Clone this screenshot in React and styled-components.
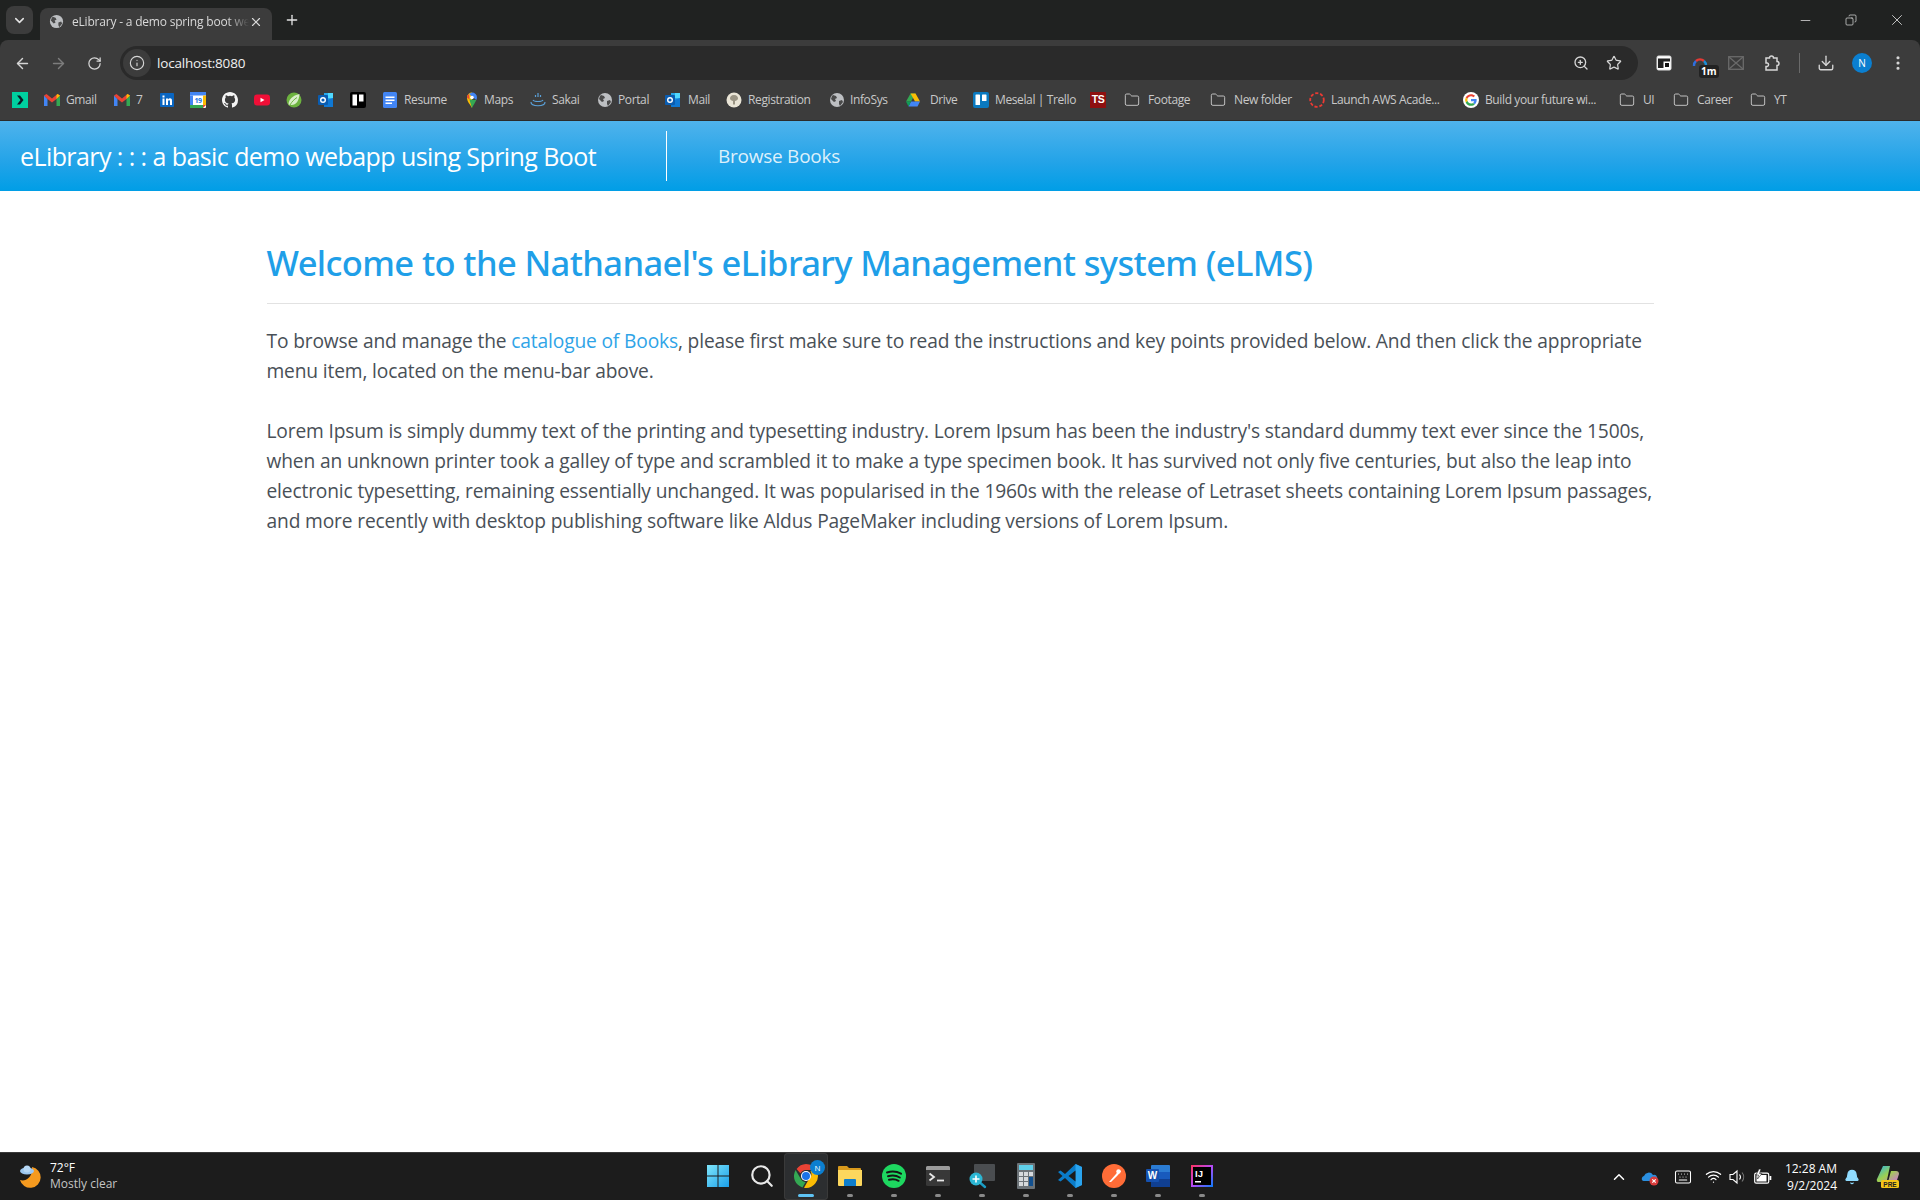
import React from "react";
import styled, { createGlobalStyle } from "styled-components";
import {
  ArrowLeft, ArrowRight, RotateCw, Info, ZoomIn, Star, Download, Folder,
  X, Plus, Minus, ChevronDown, ChevronUp, Copy, EllipsisVertical, Search, Keyboard, Wifi, Bell
} from "lucide-react";

const GlobalStyle = createGlobalStyle`
  html, body { margin: 0; padding: 0; background: #fff; }
  body { font-family: "Open Sans", "Liberation Sans", sans-serif; }
`;

const Page = styled.div`
  display: flex;
  flex-direction: column;
  height: 1200px;
  overflow: hidden;
`;

/* browser chrome */
const BrowserChrome = styled.header`
  flex: none;
  background: #202221;
`;
const TabStrip = styled.div`
  display: flex;
  height: 40px;
  box-sizing: border-box;
`;
const TabSearch = styled.div`
  display: flex;
  align-items: center;
  justify-content: center;
  width: 27px;
  height: 28px;
  margin: 6px 7px 0 6px;
  border-radius: 8px;
  background: #3c3c3c;
  color: #e3e3e3;
`;
const Tab = styled.div`
  display: flex;
  align-items: center;
  width: 232px;
  height: 32px;
  margin-top: 8px;
  padding: 0 9px 5px 9px;
  box-sizing: border-box;
  border-radius: 8px 8px 0 0;
  background: #3c3c3c;
  color: #d9d9d9;
`;
const TabTitle = styled.span`
  flex: 1;
  margin-left: 8px;
  font-size: 12px;
  letter-spacing: -0.2px;
  white-space: nowrap;
  overflow: hidden;
  -webkit-mask-image: linear-gradient(90deg, #000 88%, transparent);
  mask-image: linear-gradient(90deg, #000 88%, transparent);
`;
const NewTab = styled.div`
  display: flex;
  align-items: center;
  margin-left: 12px;
  color: #e3e3e3;
`;
const WindowControls = styled.div`
  display: flex;
  margin-left: auto;
  color: #e3e3e3;
`;
const WindowButton = styled.div`
  display: flex;
  align-items: center;
  justify-content: center;
  width: 46px;
  height: 40px;
`;
const Toolbar = styled.div`
  display: flex;
  align-items: center;
  height: 44px;
  padding: 2px 4px 0;
  box-sizing: border-box;
  background: #3c3c3c;
  border-radius: 8px 8px 0 0;
`;
const ToolButton = styled.div`
  display: flex;
  align-items: center;
  justify-content: center;
  position: relative;
  flex: none;
  width: 36px;
  height: 34px;
  color: ${(p) => (p.$dim ? "#7d7d7d" : "#d6d6d6")};
`;
const Omnibox = styled.div`
  display: flex;
  align-items: center;
  flex: 1;
  height: 34px;
  margin: 0 8px;
  padding: 0 8px 0 3px;
  border-radius: 17px;
  background: #2a2a2a;
  color: #d6d6d6;
`;
const SiteInfo = styled.div`
  display: flex;
  align-items: center;
  justify-content: center;
  width: 28px;
  height: 28px;
  border-radius: 50%;
  background: #3c3c3c;
`;
const Url = styled.span`
  flex: 1;
  margin-left: 6px;
  font-size: 13.5px;
  letter-spacing: -0.2px;
  color: #f0f0f0;
`;
const OmniAction = styled.div`
  display: flex;
  justify-content: center;
  width: 33px;
`;
const ToolSeparator = styled.div`
  flex: none;
  width: 1px;
  height: 20px;
  margin: 0 8px 0 9px;
  background: #6a6a6a;
`;
const Badge = styled.span`
  position: absolute;
  left: 17px;
  top: 19px;
  padding: 0 2px;
  border-radius: 3px;
  background: #222;
  color: #fff;
  font-size: 10px;
  line-height: 13px;
  font-weight: 700;
`;
const Avatar = styled.div`
  display: flex;
  align-items: center;
  justify-content: center;
  width: 20px;
  height: 20px;
  border-radius: 50%;
  background: #0b7fd0;
  color: #fff;
  font-size: 10px;
`;
const BookmarkBar = styled.div`
  display: flex;
  align-items: center;
  height: 37px;
  padding: 0 0 5px 4px;
  box-sizing: border-box;
  background: #3c3c3c;
  border-bottom: 1px solid #2b2b2b;
`;
const Bookmark = styled.div`
  display: flex;
  align-items: center;
  flex: none;
  gap: ${(p) => p.$gap || 6}px;
  width: ${(p) => p.$w}px;
  padding-left: 8px;
  box-sizing: border-box;
  color: #c9c9c9;
  font-size: 12px;
  letter-spacing: -0.38px;
  white-space: nowrap;
  svg { flex: none; }
`;

/* the demo page */
const NavBar = styled.nav`
  display: flex;
  align-items: center;
  height: 70px;
  flex: none;
  background: linear-gradient(#4fb3ec, #22a3e8 60%, #009ee6);
  color: #fff;
`;
const Brand = styled.a`
  width: 667px;
  height: 50px;
  padding-left: 20px;
  box-sizing: border-box;
  border-right: 1px solid #fff;
  font-size: 25px;
  line-height: 50px;
  letter-spacing: -0.58px;
`;
const NavLink = styled.a`
  margin-left: 51px;
  font-size: 19px;
  letter-spacing: -0.25px;
  color: rgba(255, 255, 255, 0.85);
`;
const Main = styled.main`
  flex: 1;
  width: 1387px;
  margin: 0 auto;
  padding-top: 50px;
  color: #495057;
`;
const Heading = styled.h1`
  margin: 0;
  padding-bottom: 19px;
  border-bottom: 1px solid #e2e2e2;
  font-family: "Noto Sans", "Open Sans", sans-serif;
  font-size: 34.5px;
  font-weight: 500;
  line-height: 43px;
  letter-spacing: -0.62px;
  color: #1f9fe8;
`;
const Text = styled.p`
  margin: ${(p) => (p.$first ? "22px 0 30px" : "0")};
  font-size: 19.2px;
  line-height: 30px;
  letter-spacing: -0.15px;
`;
const TextLink = styled.a`
  color: #2fa4e7;
`;

/* windows taskbar */
const Taskbar = styled.footer`
  display: grid;
  grid-template-columns: 1fr auto 1fr;
  flex: none;
  height: 48px;
  box-sizing: border-box;
  border-top: 1px solid #3a3a3a;
  background: #1c1c1c;
  color: #fff;
`;
const Weather = styled.div`
  display: flex;
  align-items: center;
  padding: 0 0 2px 19px;
  gap: 7px;
  font-size: 12px;
  line-height: 16px;
`;
const WeatherDim = styled.div`
  color: #c4c4c4;
`;
const Dock = styled.div`
  display: flex;
`;
const DockItem = styled.div`
  display: flex;
  align-items: center;
  justify-content: center;
  position: relative;
  width: 44px;
  height: 47px;
  padding-bottom: 2px;
  box-sizing: border-box;
  ${(p) => p.$active && "background: #2c2e30; border-radius: 4px; box-shadow: inset 0 0 0 1px #3a3a3a;"}
`;
const DockDot = styled.span`
  position: absolute;
  left: 50%;
  bottom: 3px;
  transform: translateX(-50%);
  width: ${(p) => (p.$active ? 16 : 6)}px;
  height: 3px;
  border-radius: 2px;
  background: ${(p) => (p.$active ? "#5fc4f5" : "#8a8a8a")};
`;
const DockBadge = styled.span`
  position: absolute;
  right: 3px;
  top: 7px;
  width: 15px;
  height: 15px;
  border-radius: 50%;
  background: #0b7fd0;
  color: #fff;
  font-size: 8px;
  line-height: 15px;
  text-align: center;
`;
const Tray = styled.div`
  display: flex;
  align-items: center;
  justify-content: flex-end;
  padding-right: 11px;
`;
const TrayIcon = styled.div`
  display: flex;
  justify-content: center;
  flex: none;
  width: ${(p) => p.$w || 24}px;
  margin-left: ${(p) => p.$ml || 0}px;
`;
const Clock = styled.div`
  margin-left: 10px;
  font-size: 12px;
  line-height: 17px;
  text-align: right;
`;

/* favicons */
const Globe = ({ size = 16 }) => (
  <svg width={size} height={size} viewBox="0 0 16 16">
    <circle cx="8" cy="8" r="7" fill="#bdbfc2" />
    <path d="M4 3l3 1 1 2-2 1 1 2-2 1-3-3 1-3zM10 9l3-1 1 2-3 4-1-2z" fill="#4a4a4a" />
  </svg>
);
const Gmail = () => (
  <svg width="16" height="16" viewBox="0 0 16 16">
    <path d="M0 3.500V14h3.500V7z" fill="#4285f4" />
    <path d="M16 3.500V14h-3.500V7z" fill="#34a853" />
    <path d="M0 3.500L2.500 2 8 6.500 13.500 2 16 3.500 12.500 7 8 10.500 3.500 7z" fill="#ea4335" />
    <path d="M12.500 3L13.500 2 16 3.500 12.500 7z" fill="#fbbc04" />
  </svg>
);
const LinkedIn = () => (
  <svg width="16" height="16" viewBox="0 0 16 16">
    <rect x="1" y="1" width="14" height="14" rx="1" fill="#0a66c2" />
    <path d="M3.500 6.500h2V13h-2zM3.500 3.500h2v2h-2zM7 6.500h2v1c.5-.8 1.200-1.200 2-1.200 1.600 0 2 1.100 2 2.700v4h-2V9.500c0-.8-.2-1.300-.9-1.300-.8 0-1.100.6-1.100 1.400V13H7z" fill="#fff" />
  </svg>
);
const Calendar = () => (
  <svg width="16" height="16" viewBox="0 0 16 16">
    <rect x="0" y="0" width="16" height="16" rx="1" fill="#fff" />
    <path d="M0 0h16v3.500H0z" fill="#4285f4" />
    <path d="M0 3.500h3V13H0z" fill="#4285f4" />
    <path d="M13 3.500h3V13h-3z" fill="#fbbc04" />
    <path d="M0 13h13v3H0z" fill="#34a853" />
    <path d="M13 13h3l-3 3z" fill="#ea4335" />
    <text x="8" y="11" fontSize="7" fontWeight="700" textAnchor="middle" fill="#1a73e8">19</text>
  </svg>
);
const GitHub = () => (
  <svg width="16" height="16" viewBox="0 0 16 16">
    <path fill="#f4f4f4" d="M8 0C3.580 0 0 3.580 0 8c0 3.540 2.290 6.530 5.470 7.590.4.070.55-.17.55-.38 0-.19-.01-.82-.01-1.490-2.010.37-2.530-.49-2.690-.94-.09-.23-.48-.94-.82-1.130-.28-.15-.68-.52-.01-.53.63-.01 1.080.58 1.230.82.720 1.210 1.870.870 2.330.660.070-.520.280-.870.510-1.070-1.780-.2-3.640-.890-3.640-3.950 0-.870.310-1.590.820-2.150-.08-.2-.36-1.020.08-2.120 0 0 .670-.210 2.200.820a7.420 7.420 0 0 1 4 0c1.530-1.040 2.200-.820 2.200-.820.440 1.100.160 1.920.080 2.120.510.560.820 1.270.820 2.150 0 3.070-1.870 3.750-3.650 3.950.290.250.540.730.540 1.480 0 1.070-.01 1.930-.01 2.200 0 .210.150.460.550.380A8.010 8.010 0 0 0 16 8c0-4.420-3.580-8-8-8z" />
  </svg>
);
const YouTube = () => (
  <svg width="16" height="16" viewBox="0 0 16 16">
    <rect x="0" y="2.500" width="16" height="11" rx="3" fill="#f00f37" />
    <path d="M6.500 5.700L10.500 8l-4 2.300z" fill="#fff" />
  </svg>
);
const Spring = () => (
  <svg width="16" height="16" viewBox="0 0 16 16">
    <circle cx="8" cy="8" r="7.500" fill="#6db33f" />
    <path d="M2.500 12.500c0-5 4-9 11-10.500-.5 7-3.500 11-8 11-1 0-2 0-3-.5z" fill="#d9eec9" />
    <path d="M4 13c2-3.500 4-5.500 7-7.500" fill="none" stroke="#6db33f" strokeWidth="1" />
  </svg>
);
const Outlook = () => (
  <svg width="16" height="16" viewBox="0 0 16 16">
    <path d="M6 1h9v14H6z" fill="#28a8ea" />
    <path d="M10 1h5v5h-5z" fill="#50d9ff" />
    <path d="M6 9l9-3v9H6z" fill="#0f78d4" />
    <rect x="0" y="3" width="10" height="10" rx="1" fill="#0a5cb0" />
    <circle cx="5" cy="8" r="2.300" fill="none" stroke="#fff" strokeWidth="1.400" />
  </svg>
);
const TrelloDark = () => (
  <svg width="16" height="16" viewBox="0 0 16 16">
    <rect width="16" height="16" rx="2" fill="#000" />
    <rect x="2.500" y="2.500" width="4.500" height="11" fill="#fff" />
    <rect x="9" y="2.500" width="4.500" height="7" fill="#fff" />
  </svg>
);
const TrelloBlue = () => (
  <svg width="16" height="16" viewBox="0 0 16 16">
    <rect width="16" height="16" rx="2" fill="#0a79bf" />
    <rect x="2.500" y="2.500" width="4.500" height="10.500" rx=".6" fill="#fff" />
    <rect x="9" y="2.500" width="4.500" height="6.500" rx=".6" fill="#fff" />
  </svg>
);
const Docs = () => (
  <svg width="16" height="16" viewBox="0 0 16 16">
    <rect x="1" y="0" width="14" height="16" rx="1.500" fill="#4285f4" />
    <path d="M3.500 4.500h9v1.500h-9zM3.500 7.500h9V9h-9zM3.500 10.500h6.500V12H3.500z" fill="#fff" />
  </svg>
);
const Maps = () => (
  <svg width="16" height="16" viewBox="0 0 16 16">
    <path d="M8 16C6 12 3 10 3 5.500a5 5 0 0 1 5-5z" fill="#fbbc04" />
    <path d="M8 .5a5 5 0 0 1 5 5c0 1-.3 1.800-.7 2.600L5 2z" fill="#4285f4" />
    <path d="M5 2L3.500 3.500 3 5.500l2.500 2z" fill="#ea4335" />
    <path d="M8 16c1.500-3 3-5 4.300-7.900L5.500 7.500C6 10 7 13 8 16z" fill="#34a853" />
    <circle cx="8" cy="5.500" r="1.800" fill="#fff" />
  </svg>
);
const Sakai = () => (
  <svg width="16" height="16" viewBox="0 0 16 16" fill="none" stroke="#5aa0d8" strokeWidth="1.200">
    <path d="M8 1v4M5.500 3v2M10.500 3v2" />
    <path d="M3 8c1 2 9 2 10 0M1 10c0 5 14 5 14 0" />
  </svg>
);
const Registration = () => (
  <svg width="16" height="16" viewBox="0 0 16 16">
    <circle cx="8" cy="8" r="7.500" fill="#e9e4d6" />
    <path d="M8 3c3 0 4 2 4 3.500S10 9 9 9v3.500H7V9C6 9 4 8 4 6.500S5 3 8 3z" fill="#9a9484" />
  </svg>
);
const Drive = () => (
  <svg width="16" height="16" viewBox="0 0 16 16">
    <path d="M5.500 1.500h5L6 9.500H1z" fill="#34a853" />
    <path d="M5.500 1.500h5L15 9.500h-5z" fill="#fbbc04" />
    <path d="M3.500 14.500L6 9.500h9l-2.500 5z" fill="#4285f4" />
    <path d="M1 9.500h5l-2.500 5z" fill="#0f9d58" />
  </svg>
);
const TsLogo = () => (
  <svg width="16" height="16" viewBox="0 0 16 16">
    <rect width="16" height="16" fill="#8e1010" />
    <text x="8" y="11" fontSize="10.500" fontWeight="800" fontFamily="Liberation Sans" textAnchor="middle" fill="#fff">TS</text>
  </svg>
);
const Aws = () => (
  <svg width="16" height="16" viewBox="0 0 16 16">
    <circle cx="8" cy="8" r="6.800" fill="none" stroke="#ea3a33" strokeWidth="1.800" strokeDasharray="3.200 1.800" />
  </svg>
);
const Google = () => (
  <svg width="16" height="16" viewBox="0 0 48 48">
    <circle cx="24" cy="24" r="24" fill="#fff" />
    <path fill="#ea4335" d="M24 13c3 0 5.400 1 7.400 2.900l4.800-4.800C33 8.200 29 6.500 24 6.500 17 6.500 11 10.500 8.100 16.300l5.600 4.300C15 16.200 19.100 13 24 13z" />
    <path fill="#4285f4" d="M41 24.400c0-1.200-.1-2.400-.3-3.500H24v6.700h9.600c-.4 2.200-1.700 4-3.500 5.300l5.400 4.200C38.900 33.500 41 29.400 41 24.400z" />
    <path fill="#fbbc05" d="M13.700 27.400a10.500 10.500 0 0 1 0-6.800l-5.600-4.300a17.500 17.500 0 0 0 0 15.400z" />
    <path fill="#34a853" d="M24 41.500c4.700 0 8.700-1.600 11.500-4.300l-5.400-4.200c-1.500 1-3.500 1.600-6.100 1.600-4.900 0-9-3.200-10.300-7.600l-5.600 4.300C11 37.500 17 41.500 24 41.500z" />
  </svg>
);
const Prime = () => (
  <svg width="16" height="16" viewBox="0 0 16 16">
    <rect width="16" height="16" fill="#00d1a0" />
    <path d="M5 3.500h3L11.500 8 8 12.500H5L8.500 8z" fill="#0c1a26" />
  </svg>
);
const FolderIcon = () => <Folder size={16} strokeWidth={1.4} color="#c9c9c9" />;

const bookmarks = [
  { w: 32, icon: <Prime /> },
  { w: 70, icon: <Gmail />, label: "Gmail" },
  { w: 45, icon: <Gmail />, label: "7" },
  { w: 31, icon: <LinkedIn /> },
  { w: 32, icon: <Calendar /> },
  { w: 32, icon: <GitHub /> },
  { w: 32, icon: <YouTube /> },
  { w: 32, icon: <Spring /> },
  { w: 32, icon: <Outlook /> },
  { w: 32, icon: <TrelloDark /> },
  { w: 82, icon: <Docs />, label: "Resume" },
  { w: 66, icon: <Maps />, label: "Maps", gap: 4 },
  { w: 67, icon: <Sakai />, label: "Sakai" },
  { w: 68, icon: <Globe />, label: "Portal", gap: 5 },
  { w: 61, icon: <Outlook />, label: "Mail", gap: 7 },
  { w: 103, icon: <Registration />, label: "Registration" },
  { w: 76, icon: <Globe />, label: "InfoSys", gap: 5 },
  { w: 68, icon: <Drive />, label: "Drive", gap: 9 },
  { w: 117, icon: <TrelloBlue />, label: "Meselal | Trello" },
  { w: 34, icon: <TsLogo /> },
  { w: 86, icon: <FolderIcon />, label: "Footage", gap: 8 },
  { w: 99, icon: <FolderIcon />, label: "New folder", gap: 8 },
  { w: 154, icon: <Aws />, label: "Launch AWS Acade..." },
  { w: 156, icon: <Google />, label: "Build your future wi..." },
  { w: 54, icon: <FolderIcon />, label: "UI", gap: 8 },
  { w: 77, icon: <FolderIcon />, label: "Career", gap: 8 },
  { w: 60, icon: <FolderIcon />, label: "YT", gap: 8 },
];

/* taskbar icons */
const WinLogo = () => (
  <svg width="24" height="24" viewBox="0 0 24 24">
    <defs>
      <linearGradient id="win" x1="0" y1="0" x2="1" y2="1">
        <stop offset="0" stopColor="#7fe6fb" />
        <stop offset="1" stopColor="#1a9ee8" />
      </linearGradient>
    </defs>
    <path d="M1 1h10.500v10.500H1zM12.500 1H23v10.500H12.500zM1 12.500h10.500V23H1zM12.500 12.500H23V23H12.500z" fill="url(#win)" />
  </svg>
);
const ChromeLogo = () => (
  <svg width="24" height="24" viewBox="0 0 24 24">
    <path d="M12 0a12 12 0 0 1 10.400 6H12a6 6 0 0 0-5.500 3.500L2.600 5A12 12 0 0 1 12 0z" fill="#ea4335" />
    <path d="M1.600 6l5 8.500a6 6 0 0 0 5 3.500L8.500 23.500A12 12 0 0 1 1.600 6z" fill="#34a853" />
    <path d="M22.800 7a12 12 0 0 1-12.800 16.800l5-8.800A6 6 0 0 0 16.500 7z" fill="#fbbc04" />
    <circle cx="12" cy="12" r="5" fill="#fff" />
    <circle cx="12" cy="12" r="4" fill="#1a73e8" />
  </svg>
);
const Explorer = () => (
  <svg width="24" height="24" viewBox="0 0 24 24">
    <path d="M0 3a1 1 0 0 1 1-1h8l2 2h11a1 1 0 0 1 1 1v3H0z" fill="#d99a1c" />
    <path d="M0 6h24v15a1 1 0 0 1-1 1H1a1 1 0 0 1-1-1z" fill="#fcd75e" />
    <path d="M6 22v-6a1 1 0 0 1 1-1h10a1 1 0 0 1 1 1v6z" fill="#0f7ecb" />
  </svg>
);
const Spotify = () => (
  <svg width="24" height="24" viewBox="0 0 24 24">
    <circle cx="12" cy="12" r="12" fill="#1ed760" />
    <path d="M5 8.500c5-1.500 10-1 14 1.200M6 12.300c4-1.200 8.500-.8 11.800 1.200M7 15.800c3.400-.9 6.800-.6 9.600 1" fill="none" stroke="#151515" strokeWidth="2" strokeLinecap="round" />
  </svg>
);
const Terminal = () => (
  <svg width="24" height="24" viewBox="0 0 24 24">
    <rect y="2" width="24" height="20" rx="1.500" fill="#383838" />
    <path d="M0 3.500A1.500 1.500 0 0 1 1.500 2h21A1.500 1.500 0 0 1 24 3.500V6H0z" fill="#9b9b9b" />
    <path d="M3.500 9.500L8 13l-4.500 3.500" fill="none" stroke="#e8e8e8" strokeWidth="1.800" />
    <path d="M11 16.500h7" stroke="#e8e8e8" strokeWidth="1.800" />
  </svg>
);
const Magnifier = () => (
  <svg width="26" height="26" viewBox="0 0 26 26">
    <rect x="5" y="1" width="21" height="17" rx="1" fill="#4a4d50" />
    <path d="M8 17l8 7" stroke="#1b9cc4" strokeWidth="2.400" strokeLinecap="round" />
    <circle cx="7" cy="16" r="6.500" fill="#2cb6d3" />
    <path d="M7 12.500v7M3.500 16h7" stroke="#fff" strokeWidth="1.600" />
  </svg>
);
const Calculator = () => (
  <svg width="24" height="26" viewBox="0 0 24 26">
    <rect x="3" y="0" width="18" height="26" rx="1" fill="#6c7378" />
    <rect x="5" y="2" width="14" height="5" fill="#5fd0ea" />
    <path d="M5 9h4v4H5zM10 9h4v4h-4zM15 9h4v4h-4zM5 14h4v4H5zM10 14h4v4h-4zM5 19h4v4H5zM10 19h4v4h-4z" fill="#d6dadd" />
    <path d="M15 14h4v9h-4z" fill="#12508f" />
  </svg>
);
const VsCode = () => (
  <svg width="24" height="24" viewBox="0 0 24 24">
    <path d="M17.500 0L24 3v18l-6.500 3L7 14l-4.500 3.500L0 16l4.500-4L0 8l2.500-1.500L7 10z" fill="#0a7cc9" />
    <path d="M17.500 0L24 3v18l-6.500 3z" fill="#2aa4ee" />
    <path d="M17.500 6.500L10.500 12l7 5.500z" fill="#1c1c1c" />
  </svg>
);
const Postman = () => (
  <svg width="24" height="24" viewBox="0 0 24 24">
    <circle cx="12" cy="12" r="12" fill="#ff6c37" />
    <path d="M7 18l7-8 3-4 2 1-3 4-7 7z" fill="#fff" />
    <circle cx="16.500" cy="7.500" r="2.200" fill="#fff" />
  </svg>
);
const Word = () => (
  <svg width="24" height="24" viewBox="0 0 24 24">
    <rect x="5" y="1" width="19" height="22" rx="1" fill="#2b7cd3" />
    <path d="M5 8h19v7H5z" fill="#185abd" />
    <path d="M5 15h19v8H5z" fill="#103f91" />
    <rect x="0" y="5" width="13" height="13" rx="1" fill="#1551b0" />
    <text x="6.500" y="15" fontSize="10" fontWeight="700" fontFamily="Liberation Sans" textAnchor="middle" fill="#fff">W</text>
  </svg>
);
const Idea = () => (
  <svg width="22" height="22" viewBox="0 0 22 22">
    <defs>
      <linearGradient id="ij" x1="0" y1="0" x2="1" y2="1">
        <stop offset="0" stopColor="#fe315d" />
        <stop offset="0.5" stopColor="#b74af7" />
        <stop offset="1" stopColor="#087cfa" />
      </linearGradient>
    </defs>
    <rect width="22" height="22" fill="url(#ij)" />
    <rect x="2" y="2" width="18" height="18" fill="#000" />
    <text x="4" y="12" fontSize="9.500" fontWeight="700" fontFamily="Liberation Sans" fill="#fff">IJ</text>
    <rect x="4" y="16" width="6" height="1.500" fill="#fff" />
  </svg>
);
const WeatherIcon = () => (
  <svg width="24" height="24" viewBox="0 0 24 24">
    <path d="M13 3a10.500 10.500 0 1 1-12 13c5 2 13-2 12-13z" fill="#f59a1f" />
    <ellipse cx="8" cy="7" rx="7" ry="3.500" fill="#9cc7f0" />
    <circle cx="8" cy="5" r="3.500" fill="#b7d8f6" />
  </svg>
);
const OneDriveError = () => (
  <svg width="18" height="18" viewBox="0 0 18 18">
    <path d="M1 12a3 3 0 0 1 2-4 5 5 0 0 1 9-1 3 3 0 0 1 2 6H3a2 2 0 0 1-2-1z" fill="#2a8fe0" />
    <circle cx="13" cy="13" r="4.500" fill="#d83b3b" />
    <path d="M11.300 11.300l3.400 3.400M14.700 11.300l-3.400 3.400" stroke="#fff" strokeWidth="1.200" />
  </svg>
);
const VolumeIcon = () => (
  <svg width="18" height="16" viewBox="0 0 18 16" fill="none" stroke="#fff" strokeWidth="1.100">
    <path d="M1 5.500h3L8 2v12L4 10.500H1z" />
    <path d="M10.500 5.500a4 4 0 0 1 0 5" />
    <path d="M13 3.500a7 7 0 0 1 0 9" stroke="#777" />
  </svg>
);
const BatteryIcon = () => (
  <svg width="18" height="16" viewBox="0 0 18 16">
    <rect x="0.700" y="4.200" width="14" height="10" rx="1.500" fill="none" stroke="#fff" strokeWidth="1.200" />
    <rect x="2.500" y="6" width="10" height="6.500" fill="#fff" />
    <rect x="15.500" y="7" width="1.800" height="4" fill="#fff" />
    <path d="M5 0L2 6h2.500L3.500 10 8 4.500H5.500L7 0z" fill="#fff" stroke="#1c1c1c" strokeWidth=".6" />
  </svg>
);
const Copilot = () => (
  <svg width="24" height="24" viewBox="0 0 24 24">
    <defs>
      <linearGradient id="cop" x1="0" y1="0" x2="1" y2="1">
        <stop offset="0" stopColor="#27b4e8" />
        <stop offset="0.5" stopColor="#9fd04d" />
        <stop offset="1" stopColor="#d56be0" />
      </linearGradient>
    </defs>
    <path d="M7 1h7l-3 14a3 3 0 0 1-3 2H3a2 2 0 0 1-2-3zM15 6h5a3 3 0 0 1 3 3l-2 6a3 3 0 0 1-3 2h-6z" fill="url(#cop)" />
    <rect x="5" y="15" width="18" height="8" rx="1.500" fill="#f5c518" />
    <text x="14" y="21.500" fontSize="6.500" fontWeight="700" fontFamily="Liberation Sans" textAnchor="middle" fill="#222">PRE</text>
  </svg>
);
const PipIcon = () => (
  <svg width="16" height="16" viewBox="0 0 16 16">
    <rect x="1" y="1" width="14" height="14" rx="1.500" fill="#fff" stroke="#ddd" />
    <rect x="2" y="3.500" width="12" height="9.500" fill="#222" />
    <rect x="7.500" y="6.500" width="6.500" height="6.500" fill="#fff" />
    <rect x="9" y="8" width="4" height="4" fill="#111" />
  </svg>
);
const Lighthouse = () => (
  <svg width="16" height="16" viewBox="0 0 16 16" fill="none" strokeWidth="2.400">
    <path d="M2 11a6 6 0 0 1 2-5" stroke="#2f6fde" />
    <path d="M4 6a6 6 0 0 1 8 0" stroke="#e53935" />
    <path d="M12 6a6 6 0 0 1 2 5" stroke="#1c8ed8" />
  </svg>
);
const MailOff = () => (
  <svg width="16" height="14" viewBox="0 0 16 14" fill="none" stroke="#6a6a6a" strokeWidth="1.300">
    <rect x="0.700" y="0.700" width="14.600" height="12.600" />
    <path d="M1 1l14 12M15 1L1 13" />
  </svg>
);
const Extensions = () => (
  <svg width="18" height="18" viewBox="0 0 18 18" fill="none" stroke="#d6d6d6" strokeWidth="1.500">
    <path d="M3 4h3.500a2 2 0 0 1 4 0H14v3.500a2 2 0 0 1 0 4V16H3v-3.500h1.200a1.800 1.800 0 0 0 0-3.500H3z" />
  </svg>
);

const dockIcons = [
  { icon: <WinLogo />, plain: true },
  { icon: <Search size={26} strokeWidth={2} color="#e8e8e8" />, plain: true },
  { icon: <ChromeLogo />, active: true },
  { icon: <Explorer /> },
  { icon: <Spotify /> },
  { icon: <Terminal /> },
  { icon: <Magnifier /> },
  { icon: <Calculator /> },
  { icon: <VsCode /> },
  { icon: <Postman /> },
  { icon: <Word /> },
  { icon: <Idea /> },
];

const App = () => (
  <Page>
    <GlobalStyle />
    <BrowserChrome>
      <TabStrip>
        <TabSearch><ChevronDown size={15} strokeWidth={2.5} /></TabSearch>
        <Tab>
          <Globe size={15} />
          <TabTitle>eLibrary - a demo spring boot webapp</TabTitle>
          <X size={14} strokeWidth={2} />
        </Tab>
        <NewTab><Plus size={16} strokeWidth={2} /></NewTab>
        <WindowControls>
          <WindowButton><Minus size={15} strokeWidth={1.2} /></WindowButton>
          <WindowButton><Copy size={12} strokeWidth={1.4} style={{ transform: "scaleX(-1)" }} /></WindowButton>
          <WindowButton><X size={18} strokeWidth={1.1} /></WindowButton>
        </WindowControls>
      </TabStrip>
      <Toolbar>
        <ToolButton><ArrowLeft size={17} strokeWidth={2} /></ToolButton>
        <ToolButton $dim><ArrowRight size={17} strokeWidth={2} /></ToolButton>
        <ToolButton><RotateCw size={15} strokeWidth={2} /></ToolButton>
        <Omnibox>
          <SiteInfo><Info size={16} strokeWidth={1.7} /></SiteInfo>
          <Url>localhost:8080</Url>
          <OmniAction><ZoomIn size={16} strokeWidth={2} /></OmniAction>
          <OmniAction><Star size={16} strokeWidth={1.8} /></OmniAction>
        </Omnibox>
        <ToolButton><PipIcon /></ToolButton>
        <ToolButton><Lighthouse /><Badge>1m</Badge></ToolButton>
        <ToolButton><MailOff /></ToolButton>
        <ToolButton><Extensions /></ToolButton>
        <ToolSeparator />
        <ToolButton><Download size={18} strokeWidth={1.8} /></ToolButton>
        <ToolButton><Avatar>N</Avatar></ToolButton>
        <ToolButton><EllipsisVertical size={18} strokeWidth={2.2} /></ToolButton>
      </Toolbar>
      <BookmarkBar>
        {bookmarks.map((b, i) => (
          <Bookmark key={i} $w={b.w} $gap={b.gap}>
            {b.icon}
            {b.label && <span>{b.label}</span>}
          </Bookmark>
        ))}
      </BookmarkBar>
    </BrowserChrome>

    <NavBar>
      <Brand>eLibrary : : : a basic demo webapp using Spring Boot</Brand>
      <NavLink>Browse Books</NavLink>
    </NavBar>
    <Main>
      <Heading>Welcome to the Nathanael's eLibrary Management system (eLMS)</Heading>
      <Text $first>
        To browse and manage the <TextLink>catalogue of Books</TextLink>, please first make sure to read the instructions and key points provided below. And then click the appropriate menu item, located on the menu-bar above.
      </Text>
      <Text>
        Lorem Ipsum is simply dummy text of the printing and typesetting industry. Lorem Ipsum has been the industry's standard dummy text ever since the 1500s, when an unknown printer took a galley of type and scrambled it to make a type specimen book. It has survived not only five centuries, but also the leap into electronic typesetting, remaining essentially unchanged. It was popularised in the 1960s with the release of Letraset sheets containing Lorem Ipsum passages, and more recently with desktop publishing software like Aldus PageMaker including versions of Lorem Ipsum.
      </Text>
    </Main>

    <Taskbar>
      <Weather>
        <WeatherIcon />
        <div>
          <div>72°F</div>
          <WeatherDim>Mostly clear</WeatherDim>
        </div>
      </Weather>
      <Dock>
        {dockIcons.map((d, i) => (
          <DockItem key={i} $active={d.active}>
            {d.icon}
            {d.active && <DockBadge>N</DockBadge>}
            {!d.plain && <DockDot $active={d.active} />}
          </DockItem>
        ))}
      </Dock>
      <Tray>
        <TrayIcon><ChevronUp size={18} strokeWidth={2} /></TrayIcon>
        <TrayIcon $ml={4} $w={30}><OneDriveError /></TrayIcon>
        <TrayIcon $ml={6}><Keyboard size={18} strokeWidth={1.4} /></TrayIcon>
        <TrayIcon $ml={7}><Wifi size={17} strokeWidth={1.8} /></TrayIcon>
        <TrayIcon><VolumeIcon /></TrayIcon>
        <TrayIcon $ml={1}><BatteryIcon /></TrayIcon>
        <Clock>
          <div>12:28 AM</div>
          <div>9/2/2024</div>
        </Clock>
        <TrayIcon $ml={3}><Bell size={16} fill="#90dcff" color="#90dcff" /></TrayIcon>
        <TrayIcon $ml={3} $w={42}><Copilot /></TrayIcon>
      </Tray>
    </Taskbar>
  </Page>
);

export default App;
